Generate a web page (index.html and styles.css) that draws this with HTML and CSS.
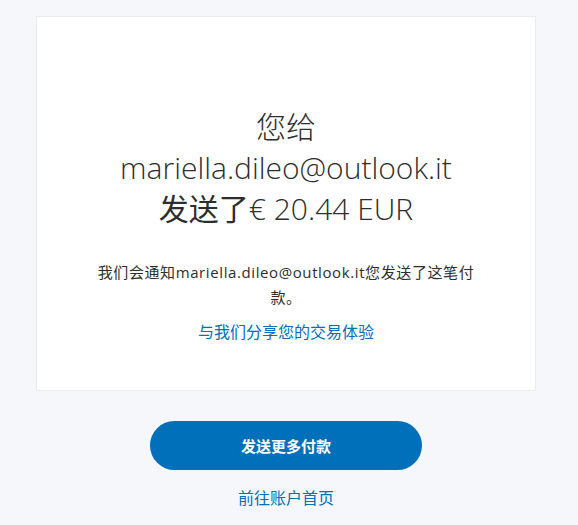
FILE: index.html
```html
<!DOCTYPE html>
<html lang="zh-CN">
<head>
<meta charset="utf-8">
<title>付款已发送</title>
<link rel="stylesheet" href="styles.css">
</head>
<body>
<main class="page">
  <section class="card">
    <h1 class="title">
      <span class="line">您给</span>
      <span class="line">mariella.dileo@outlook.it</span>
      <span class="line"><span class="cjk-strong">发送了</span>€ 20.44 EUR</span>
    </h1>
    <p class="note">我们会通知mariella.dileo@outlook.it您发送了这笔付款。</p>
    <a class="share" href="#">与我们分享您的交易体验</a>
  </section>
  <div class="actions">
    <a class="btn-primary" href="#">发送更多付款</a>
    <a class="link-home" href="#">前往账户首页</a>
  </div>
</main>
</body>
</html>
```
FILE: styles.css
```css
html, body {
  margin: 0;
  padding: 0;
}
body {
  background: #f5f7fa;
  font-family: "Open Sans", "Noto Sans CJK SC", sans-serif;
  color: #2c2e2f;
}
.page {
  width: 500px;
  margin-left: 36px;
  padding-top: 16px;
}
.card {
  background: #ffffff;
  border: 1px solid #eaeced;
  box-sizing: border-box;
  height: 375px;
  padding: 89px 58px 0;
  display: flex;
  flex-direction: column;
  align-items: center;
  text-align: center;
}
.title {
  margin: 0;
  font-size: 30px;
  font-weight: 300;
  line-height: 41px;
  color: #2c2e2f;
  display: flex;
  flex-direction: column;
  align-items: center;
}
.cjk-strong {
  font-weight: 400;
}
.note {
  margin: 31px 0 0;
  font-size: 15px;
  line-height: 25px;
  letter-spacing: 0.6px;
  color: #2c2e2f;
}
.share {
  margin-top: 10px;
  font-size: 16px;
  line-height: 24px;
  color: #0070ba;
  text-decoration: none;
}
.actions {
  display: flex;
  flex-direction: column;
  align-items: center;
  padding-top: 30px;
}
.btn-primary {
  width: 272px;
  height: 49px;
  border-radius: 25px;
  background: #0070ba;
  color: #ffffff;
  font-size: 15px;
  font-weight: 600;
  display: flex;
  align-items: center;
  justify-content: center;
  text-decoration: none;
}
.link-home {
  margin-top: 16px;
  font-size: 16px;
  line-height: 24px;
  color: #0070ba;
  text-decoration: none;
}
```
